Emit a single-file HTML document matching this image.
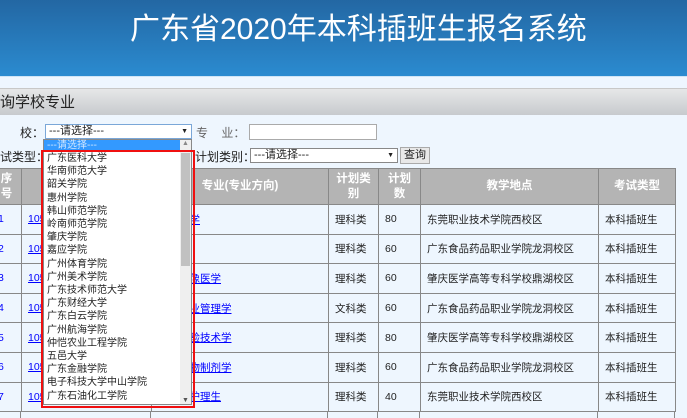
<!DOCTYPE html>
<html><head><meta charset="utf-8"><style>
*{margin:0;padding:0;box-sizing:border-box}
html,body{width:687px;height:418px;overflow:hidden}
body{background:#eef6fe;font-family:"Liberation Sans","Noto Sans CJK SC",sans-serif;font-size:12px;color:#222;position:relative}
.hdr{position:absolute;left:0;top:0;width:687px;height:76px;background:linear-gradient(#2367a3,#2b8bd0)}
.hdr h1{position:absolute;left:130px;top:4px;font-weight:normal;color:#fff;font-size:30px;font-family:"Liberation Sans","Noto Sans CJK SC",sans-serif}
.band{position:absolute;top:76px;left:0;width:687px;height:12px;background:#eef6ff;border-top:1px solid #cfe4f6}
.ttl{position:absolute;top:88px;left:0;width:687px;height:27px;background:linear-gradient(#e6e7e8,#c7cace);border-top:1px solid #c8c8c8;font-size:15px;line-height:28px;color:#222}
.a{position:absolute;white-space:nowrap}
.sel{position:absolute;border:1px solid #888;background:#fff;height:15px;font-size:11px;line-height:13px;padding-left:3px}
.sel.ar:after{content:"▼";position:absolute;right:3px;top:0;font-size:7px}
table{position:absolute;left:-9px;top:168px;border-collapse:collapse;background:#eef6fe;table-layout:fixed;width:684px}
td,th{border:1px solid #888;height:29.6px;font-size:10.5px;padding:0 0 0 6px;text-align:left;font-weight:normal;white-space:nowrap;overflow:hidden}
th{background:#b4b4b4;color:#fff;font-weight:bold;text-align:center;height:36px;line-height:15px;font-size:11.5px;padding:0}
td a{color:#00f;text-decoration:underline}
.dd{position:absolute;left:43px;top:139px;width:149px;height:266px;background:#fff;border:1px solid #888}
.dd .hl{background:#3399ff;color:#cfe6ff;height:11px;line-height:11px;font-size:10px;padding-left:3px}
.dd ul{list-style:none;position:absolute;left:3px;top:12px;font-size:10px;line-height:13.2px}
.sb{position:absolute;right:0;top:0;width:11px;height:264px;background:#efefef}
.th{position:absolute;right:1px;top:13px;width:9px;height:113px;background:#c1c1c1}
.red{position:absolute;left:41px;top:150px;width:154px;height:258px;border:2px solid #f01010}
.bot{position:absolute;left:0;top:412px;width:675px;height:6px;border-left:0;overflow:hidden}
</style></head><body>
<div class="hdr"><h1>广东省2020年本科插班生报名系统</h1></div>
<div class="band"></div>
<div class="ttl">询学校专业</div>
<div class="a" style="left:20px;top:124px">校：</div>
<div class="sel ar" style="left:45px;top:124px;width:147px;border-color:#7aa7d8">---请选择---</div>
<div class="a" style="left:196px;top:124px;color:#666">专&nbsp;&nbsp;&nbsp;&nbsp;业：</div>
<div class="sel" style="left:249px;top:124px;width:128px;height:16px;border-color:#aaa"></div>
<div class="a" style="left:0;top:148px">试类型：</div>
<div class="a" style="left:195px;top:148px">计划类别：</div>
<div class="sel ar" style="left:250px;top:148px;width:148px">---请选择---</div>
<div class="a" style="left:400px;top:147px;width:30px;height:17px;border:1px solid #aaa;background:#e8e8e8;text-align:center;line-height:15px;font-size:11px">查询</div>
<table>
<colgroup><col style="width:30px"><col style="width:130px"><col style="width:177px"><col style="width:50px"><col style="width:42px"><col style="width:178px"><col style="width:77px"></colgroup>
<tr><th>序<br>号</th><th></th><th>专业(专业方向)</th><th>计划类<br>别</th><th>计划<br>数</th><th>教学地点</th><th>考试类型</th></tr>
<tr><td style="color:#00f">1</td><td><a>10571</a></td><td><a>临床医学</a></td><td>理科类</td><td>80</td><td>东莞职业技术学院西校区</td><td>本科插班生</td></tr>
<tr><td style="color:#00f">2</td><td><a>10571</a></td><td><a>护理学</a></td><td>理科类</td><td>60</td><td>广东食品药品职业学院龙洞校区</td><td>本科插班生</td></tr>
<tr><td style="color:#00f">3</td><td><a>10571</a></td><td><a>医学影像医学</a></td><td>理科类</td><td>60</td><td>肇庆医学高等专科学校鼎湖校区</td><td>本科插班生</td></tr>
<tr><td style="color:#00f">4</td><td><a>10571</a></td><td><a>公共事业管理学</a></td><td>文科类</td><td>60</td><td>广东食品药品职业学院龙洞校区</td><td>本科插班生</td></tr>
<tr><td style="color:#00f">5</td><td><a>10571</a></td><td><a>医学检验技术学</a></td><td>理科类</td><td>80</td><td>肇庆医学高等专科学校鼎湖校区</td><td>本科插班生</td></tr>
<tr><td style="color:#00f">6</td><td><a>10571</a></td><td><a>药学药物制剂学</a></td><td>理科类</td><td>60</td><td>广东食品药品职业学院龙洞校区</td><td>本科插班生</td></tr>
<tr><td style="color:#00f">7</td><td><a>10571</a></td><td><a>护理学护理生</a></td><td>理科类</td><td>40</td><td>东莞职业技术学院西校区</td><td>本科插班生</td></tr>
</table>
<div class="bot">
<div style="position:absolute;left:20px;top:0;width:1px;height:6px;background:#888"></div>
<div style="position:absolute;left:150px;top:0;width:1px;height:6px;background:#888"></div>
<div style="position:absolute;left:327px;top:0;width:1px;height:6px;background:#888"></div>
<div style="position:absolute;left:377px;top:0;width:1px;height:6px;background:#888"></div>
<div style="position:absolute;left:419px;top:0;width:1px;height:6px;background:#888"></div>
<div style="position:absolute;left:597px;top:0;width:1px;height:6px;background:#888"></div>
<div style="position:absolute;left:674px;top:0;width:1px;height:6px;background:#888"></div>
</div>
<div class="dd"><div class="hl">---请选择---</div>
<ul><li>广东医科大学</li><li>华南师范大学</li><li>韶关学院</li><li>惠州学院</li><li>韩山师范学院</li><li>岭南师范学院</li><li>肇庆学院</li><li>嘉应学院</li><li>广州体育学院</li><li>广州美术学院</li><li>广东技术师范大学</li><li>广东财经大学</li><li>广东白云学院</li><li>广州航海学院</li><li>仲恺农业工程学院</li><li>五邑大学</li><li>广东金融学院</li><li>电子科技大学中山学院</li><li>广东石油化工学院</li></ul>
<div class="sb"><div class="th"></div><span style="position:absolute;left:2px;top:0;font-size:7px;color:#888">▲</span><span style="position:absolute;left:2px;bottom:0;font-size:7px;color:#555">▼</span></div>
</div>
<div class="red"></div>
</body></html>
